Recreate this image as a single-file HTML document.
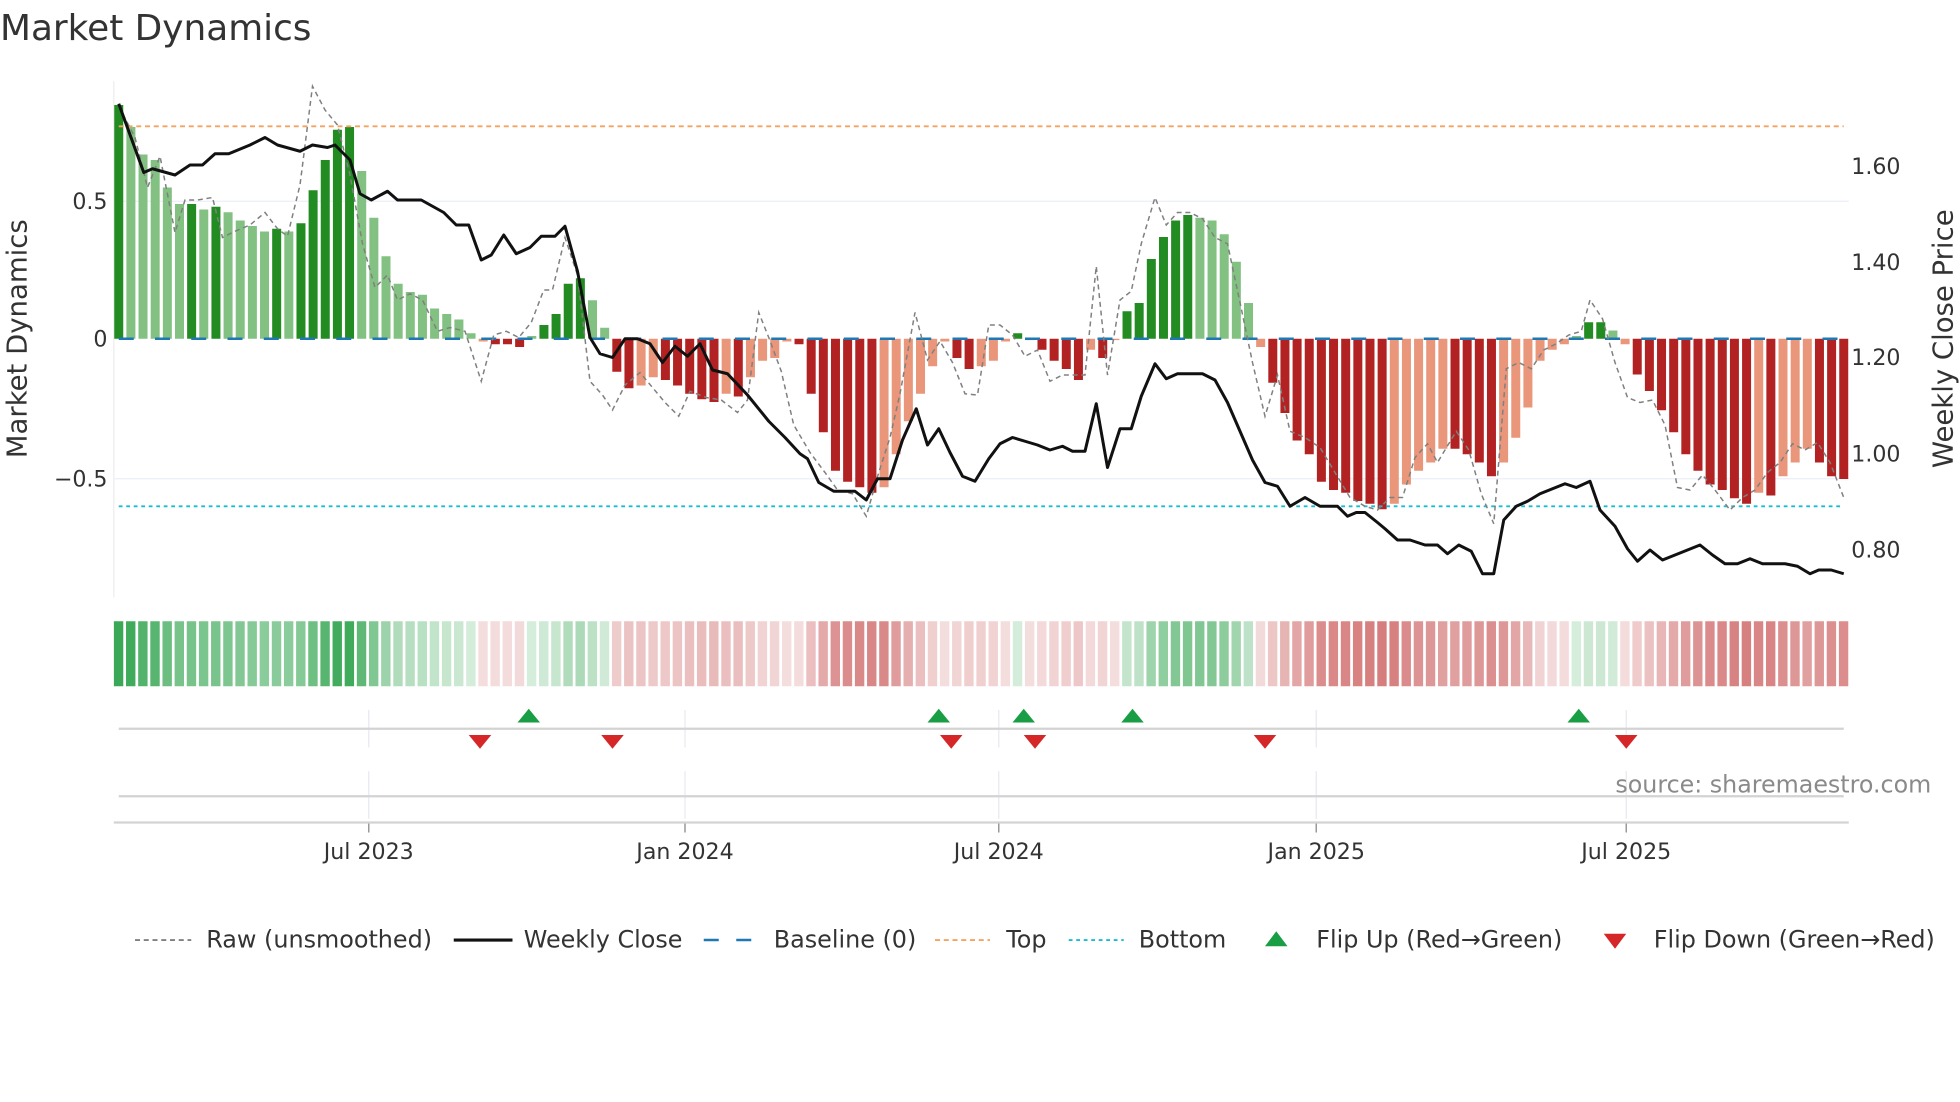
<!DOCTYPE html>
<html><head><meta charset="utf-8"><style>
html,body{margin:0;padding:0;background:#fff;width:1960px;height:1102px;overflow:hidden}
svg{display:block;font-family:"DejaVu Sans","Liberation Sans",sans-serif}
</style></head><body>
<svg id="s" width="1960" height="1102" viewBox="0 0 1568 881.6" xmlns="http://www.w3.org/2000/svg">
<text x="0" y="32" font-size="28.7" fill="#333">Market Dynamics</text>
<g id="grid"></g>
<g id="bars"></g>
<g id="lines"></g>
<g id="strip"></g>
<g id="flips"></g>
<g font-size="17.7" fill="#333">
<text x="86" y="167" text-anchor="end">0.5</text>
<text x="86" y="277" text-anchor="end">0</text>
<text x="86" y="389" text-anchor="end">−0.5</text>
<text x="1481" y="139">1.60</text>
<text x="1481" y="216">1.40</text>
<text x="1481" y="292">1.20</text>
<text x="1481" y="369">1.00</text>
<text x="1481" y="446">0.80</text>
<text x="295" y="687" text-anchor="middle">Jul 2023</text>
<text x="548" y="687" text-anchor="middle">Jan 2024</text>
<text x="799" y="687" text-anchor="middle">Jul 2024</text>
<text x="1053" y="687" text-anchor="middle">Jan 2025</text>
<text x="1301" y="687" text-anchor="middle">Jul 2025</text>
</g>
<text transform="translate(21,271) rotate(-90)" font-size="22" fill="#333" text-anchor="middle">Market Dynamics</text>
<text transform="translate(1562,271) rotate(-90)" font-size="22" fill="#333" text-anchor="middle">Weekly Close Price</text>
<text x="1545" y="634" font-size="19" fill="#8a8a8a" text-anchor="end">source: sharemaestro.com</text>
<g font-size="19.1" fill="#333">
<line x1="108" y1="752" x2="153" y2="752" stroke="#808080" stroke-width="1.5" stroke-dasharray="4,3"/>
<text x="165" y="758">Raw (unsmoothed)</text>
<line x1="363" y1="752" x2="410" y2="752" stroke="#111" stroke-width="2.5"/>
<text x="419" y="758">Weekly Close</text>
<line x1="563" y1="752" x2="607" y2="752" stroke="#1f77b4" stroke-width="2" stroke-dasharray="12,14"/>
<text x="619" y="758">Baseline (0)</text>
<line x1="748" y1="752" x2="792" y2="752" stroke="#f4a460" stroke-width="1.5" stroke-dasharray="4,3"/>
<text x="805" y="758">Top</text>
<line x1="855" y1="752" x2="899" y2="752" stroke="#17becf" stroke-width="1.5" stroke-dasharray="3,3"/>
<text x="911" y="758">Bottom</text>
<polygon points="1012,757 1030,757 1021,745" fill="#1a9e45"/>
<text x="1053" y="758">Flip Up (Red→Green)</text>
<polygon points="1283,747 1301,747 1292,759" fill="#d62728"/>
<text x="1323" y="758">Flip Down (Green→Red)</text>
</g>
</svg>
<script>
const NS="http://www.w3.org/2000/svg";
function el(p,t,a){const e=document.createElementNS(NS,t);for(const k in a)e.setAttribute(k,a[k]);document.getElementById(p).appendChild(e);return e;}
const v=[0.85,0.77,0.67,0.65,0.55,0.49,0.49,0.47,0.48,0.46,0.43,0.41,0.39,0.40,0.39,0.42,0.54,0.65,0.76,0.77,0.61,0.44,0.30,0.20,0.17,0.16,0.11,0.09,0.07,0.02,-0.01,-0.02,-0.02,-0.03,0.01,0.05,0.09,0.20,0.22,0.14,0.04,
-0.12,-0.18,-0.17,-0.14,-0.15,-0.17,-0.2,-0.22,-0.23,-0.2,-0.21,-0.14,-0.08,-0.07,-0.01,-0.02,-0.2,-0.34,-0.48,-0.52,-0.54,-0.56,-0.54,-0.42,-0.3,-0.2,-0.1,-0.01,-0.07,-0.11,-0.1,-0.08,-0.01,0.02,-0.005,-0.04,-0.08,-0.11,-0.15,-0.04,-0.07,-0.005,
0.10,0.13,0.29,0.37,0.43,0.45,0.44,0.43,0.38,0.28,0.13,-0.03,-0.16,-0.27,-0.37,-0.42,-0.52,-0.55,-0.56,-0.59,-0.6,-0.62,-0.6,-0.53,-0.48,-0.45,-0.4,-0.4,-0.42,-0.45,-0.5,-0.45,-0.36,-0.25,-0.08,-0.04,-0.02,0.01,0.06,0.06,0.03,-0.02,-0.13,-0.19,-0.26,-0.34,-0.42,-0.48,-0.53,-0.55,-0.58,-0.6,-0.56,-0.57,-0.5,-0.45,-0.4,-0.45,-0.5,-0.51];
const N=v.length, x0=95, p=(1475-95)/(N-1);
el("grid","line",{x1:91,y1:65,x2:91,y2:478,stroke:"#eee","stroke-width":1});
el("grid","line",{x1:91,y1:161,x2:1479,y2:161,stroke:"#eceff8","stroke-width":1});
el("grid","line",{x1:91,y1:383,x2:1479,y2:383,stroke:"#eceff8","stroke-width":1});
for(let i=0;i<N;i++){
  const x=x0+i*p, y=271-v[i]*220, dark=i==0||Math.abs(v[i])>=Math.abs(v[i-1]);
  const c=v[i]>=0?(dark?"#228b22":"#82c182"):(dark?"#b22222":"#e9967a");
  el("bars","rect",{x:x-3.6,y:Math.min(y,271),width:7.2,height:Math.max(Math.abs(v[i])*220,0.6),fill:c});
  const a=Math.min(1,0.2+Math.abs(v[i])*1.0);
  el("strip","rect",{x:x-3.9,y:497,width:p-2.2,height:52,fill:v[i]>=0?"#3aa856":"#cd6060","fill-opacity":a.toFixed(2)});
}
el("lines","line",{x1:95,y1:101,x2:1475,y2:101,stroke:"#f4a460","stroke-width":1.5,"stroke-dasharray":"4,3"});
el("lines","line",{x1:95,y1:405,x2:1475,y2:405,stroke:"#17becf","stroke-width":1.5,"stroke-dasharray":"3,3"});
el("lines","line",{x1:95,y1:271,x2:1475,y2:271,stroke:"#1f77b4","stroke-width":2,"stroke-dasharray":"12,17"});
const raw="95 85 108 110 118 150 128 125 140 186 148 160 158 160 170 158 178 190 188 185 200 180 212 170 222 183 230 189 240 148 250 69 260 88 270 100 280 140 290 195 300 230 310 220 318 240 328 235 338 240 350 265 360 262 372 265 385 305 395 268 405 265 415 270 425 258 435 232 442 232 452 190 462 220 472 305 482 316 490 328 500 308 512 298 522 310 532 322 543 333 552 313 565 318 577 320 590 330 598 320 607 250 615 270 625 297 635 340 648 362 660 378 670 392 682 395 693 413 703 378 712 350 720 315 732 250 742 288 752 273 762 290 772 315 782 316 791 260 800 260 810 268 820 285 830 280 840 305 850 300 860 300 868 300 877 213 886 300 896 240 905 233 913 195 924 158 933 180 942 170 952 170 962 175 972 190 982 195 992 242 1002 290 1012 333 1022 300 1032 345 1044 350 1056 358 1068 378 1080 398 1092 405 1102 408 1112 398 1122 398 1132 366 1142 355 1150 370 1165 345 1175 360 1185 395 1195 419 1205 295 1215 290 1225 295 1235 280 1245 275 1255 268 1265 265 1272 240 1282 255 1292 290 1302 318 1312 322 1322 320 1332 340 1342 390 1352 392 1362 380 1372 392 1384 408 1394 398 1404 392 1414 378 1424 370 1434 355 1444 360 1454 354 1464 370 1475 398";
el("lines","polyline",{points:raw,fill:"none",stroke:"#808080","stroke-width":1.2,"stroke-dasharray":"4,3"});
const cl="95 83 115 138 122 135 140 140 152 132 162 132 172 123 183 123 200 116 212 110 222 116 240 121 250 116 262 118 268 116 280 128 288 155 297 160 310 153 318 160 337 160 355 170 365 180 375 180 385 208 393 204 403 188 413 203 424 198 433 189 444 189 452 181 462 217 472 270 480 283 490 286 500 271 510 271 520 275 530 290 540 277 550 285 560 275 570 296 582 299 598 316 615 337 628 350 640 363 646 367 655 386 667 393 684 393 693 400 702 383 712 383 722 352 733 327 742 356 751 343 760 362 770 381 780 385 791 367 800 355 810 350 820 353 830 356 840 360 850 357 858 361 868 361 877 323 886 374 896 343 905 343 913 317 924 291 933 303 942 299 962 299 972 304 982 322 992 345 1002 368 1012 386 1022 389 1032 405 1044 398 1056 405 1070 405 1078 413 1085 410 1092 410 1102 418 1108 423 1118 432 1128 432 1140 436 1150 436 1158 443 1167 436 1177 441 1186 459 1195 459 1203 416 1213 405 1222 401 1232 395 1242 391 1252 387 1261 390 1272 385 1280 408 1292 421 1302 439 1310 449 1320 440 1330 448 1340 444 1350 440 1360 436 1370 444 1380 451 1390 451 1400 447 1410 451 1428 451 1438 453 1448 459 1455 456 1465 456 1475 459";
el("lines","polyline",{points:cl,fill:"none",stroke:"#111","stroke-width":2.4,"stroke-linejoin":"round"});
[295,548,799,1053,1301].forEach(x=>{
  el("flips","line",{x1:x,y1:568,x2:x,y2:598,stroke:"#e6e9f0","stroke-width":1});
  el("flips","line",{x1:x,y1:617,x2:x,y2:655,stroke:"#e6e9f0","stroke-width":1});
  el("flips","line",{x1:x,y1:658,x2:x,y2:666,stroke:"#999","stroke-width":1.2});
});
el("flips","line",{x1:95,y1:583,x2:1475,y2:583,stroke:"#d3d3d3","stroke-width":1.8});
el("flips","line",{x1:95,y1:637,x2:1475,y2:637,stroke:"#d3d3d3","stroke-width":1.8});
el("flips","line",{x1:91,y1:658,x2:1479,y2:658,stroke:"#d3d3d3","stroke-width":1.8});
[423,751,819,906,1263].forEach(x=>el("flips","polygon",{points:`${x-9},578 ${x+9},578 ${x},567`,fill:"#1a9e45"}));
[384,490,761,828,1012,1301].forEach(x=>el("flips","polygon",{points:`${x-9},588 ${x+9},588 ${x},599`,fill:"#d62728"}));
</script>
</body></html>
